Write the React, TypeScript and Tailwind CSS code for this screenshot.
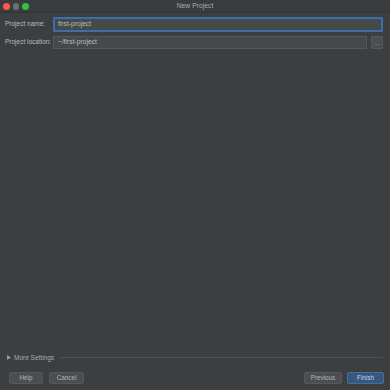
import React from "react";

const font = { fontFamily: '"Liberation Sans", Arial, sans-serif' };

const Btn: React.FC<{ label: string; primary?: boolean; w: string }> = ({ label, primary, w }) => (
  <button
    className={
      primary
        ? `${w} h-[12px] rounded-[2px] border border-[#4a6f96] bg-[#365880] text-[6.3px] leading-none text-[#c9d3dd]`
        : `${w} h-[12px] rounded-[2px] border border-[#55595b] bg-[#4a4e50] text-[6.3px] leading-none text-[#b5b5b5]`
    }
  >
    {label}
  </button>
);

const App: React.FC = () => {
  return (
    <div className="flex h-[390px] w-[390px] flex-col bg-[#3c3f41] text-[#bbbbbb]" style={font}>
      {/* title bar */}
      <div className="relative flex h-[13px] items-center justify-center border-b border-[#333537] bg-[#393b3d]">
        <div className="absolute left-[3px] top-[3px] flex gap-[3px]">
          <span className="h-[6.5px] w-[6.5px] rounded-full bg-[#fc5753]" />
          <span className="h-[6.5px] w-[6.5px] rounded-full bg-[#6b6d6f]" />
          <span className="h-[6.5px] w-[6.5px] rounded-full bg-[#27c83f]" />
        </div>
        <span className="text-[6.8px] leading-none text-[#a9abad]">New Project</span>
      </div>

      {/* form */}
      <div className="flex flex-col gap-[4px] pl-[5px] pr-[7px] pt-[4px]">
        <div className="flex items-center">
          <span className="w-[48px] whitespace-nowrap text-[6.5px] leading-none">Project name:</span>
          <div className="flex h-[15px] flex-1 items-center rounded-[1px] border-2 border-[#3c6ea8] bg-[#45494a] pl-[3px] text-[6.7px] leading-none text-[#bdbdbd]">
            first-project
          </div>
        </div>
        <div className="flex items-center gap-[4px]">
          <span className="w-[44px] whitespace-nowrap text-[6.5px] leading-none">Project location:</span>
          <div className="flex h-[13px] flex-1 items-center border border-[#55585a] bg-[#45494a] pl-[4px] text-[6.7px] leading-none text-[#bdbdbd]">
            ~/first-project
          </div>
          <div className="flex h-[13px] w-[12px] items-center justify-center rounded-[1px] border border-[#55585a] bg-[#4a4e50] text-[6px] leading-none">
            ...
          </div>
        </div>
      </div>

      <div className="flex-1" />

      {/* more settings */}
      <div className="flex items-center gap-[3px] pl-[7px] pr-[7px]">
        <svg width="4" height="5" viewBox="0 0 4 5">
          <path d="M0 0 L4 2.5 L0 5 Z" fill="#9a9a9a" />
        </svg>
        <span className="whitespace-nowrap text-[6.5px] leading-none text-[#aaaaaa]">More Settings</span>
        <div className="ml-[2px] h-px flex-1 bg-[#554e4e]" />
      </div>

      {/* footer buttons */}
      <div className="flex items-center px-[6px] pb-[6px] pt-[11px]">
        <div className="flex gap-[6px] pl-[3px]">
          <Btn label="Help" w="w-[34px]" />
          <Btn label="Cancel" w="w-[35px]" />
        </div>
        <div className="flex-1" />
        <div className="flex gap-[5px]">
          <Btn label="Previous" w="w-[38px]" />
          <Btn label="Finish" primary w="w-[37px]" />
        </div>
      </div>
    </div>
  );
};

export default App;
